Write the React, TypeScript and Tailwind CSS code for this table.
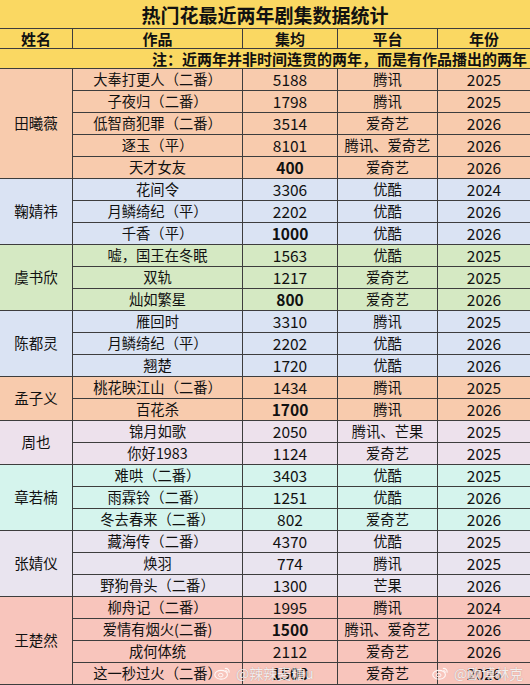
import React from "react";

type Row = { work: string; ep: string; bold?: boolean; plat: string; year: string };
type Group = { name: string; bg: string; span: string; rows: Row[] };

const groups: Group[] = [
  {
    name: "田曦薇",
    bg: "bg-[#f8cbad]",
    span: "row-span-5",
    rows: [
      { work: "大奉打更人（二番）", ep: "5188", plat: "腾讯", year: "2025" },
      { work: "子夜归（二番）", ep: "1798", plat: "腾讯", year: "2025" },
      { work: "低智商犯罪（二番）", ep: "3514", plat: "爱奇艺", year: "2026" },
      { work: "逐玉（平）", ep: "8101", plat: "腾讯、爱奇艺", year: "2026" },
      { work: "天才女友", ep: "400", bold: true, plat: "爱奇艺", year: "2026" },
    ],
  },
  {
    name: "鞠婧祎",
    bg: "bg-[#dae3f3]",
    span: "row-span-3",
    rows: [
      { work: "花间令", ep: "3306", plat: "优酷", year: "2024" },
      { work: "月鳞绮纪（平）", ep: "2202", plat: "优酷", year: "2026" },
      { work: "千香（平）", ep: "1000", bold: true, plat: "优酷", year: "2026" },
    ],
  },
  {
    name: "虞书欣",
    bg: "bg-[#d5e9c3]",
    span: "row-span-3",
    rows: [
      { work: "嘘，国王在冬眠", ep: "1563", plat: "优酷", year: "2025" },
      { work: "双轨", ep: "1217", plat: "爱奇艺", year: "2025" },
      { work: "灿如繁星", ep: "800", bold: true, plat: "爱奇艺", year: "2026" },
    ],
  },
  {
    name: "陈都灵",
    bg: "bg-[#dae3f3]",
    span: "row-span-3",
    rows: [
      { work: "雁回时", ep: "3310", plat: "腾讯", year: "2025" },
      { work: "月鳞绮纪（平）", ep: "2202", plat: "优酷", year: "2026" },
      { work: "翘楚", ep: "1720", plat: "优酷", year: "2026" },
    ],
  },
  {
    name: "孟子义",
    bg: "bg-[#f8cbad]",
    span: "row-span-2",
    rows: [
      { work: "桃花映江山（二番）", ep: "1434", plat: "腾讯", year: "2025" },
      { work: "百花杀", ep: "1700", bold: true, plat: "腾讯", year: "2026" },
    ],
  },
  {
    name: "周也",
    bg: "bg-[#ede1ec]",
    span: "row-span-2",
    rows: [
      { work: "锦月如歌", ep: "2050", plat: "腾讯、芒果", year: "2025" },
      { work: "你好1983", ep: "1124", plat: "爱奇艺", year: "2025" },
    ],
  },
  {
    name: "章若楠",
    bg: "bg-[#d5f4ed]",
    span: "row-span-3",
    rows: [
      { work: "难哄（二番）", ep: "3403", plat: "优酷", year: "2025" },
      { work: "雨霖铃（二番）", ep: "1251", plat: "优酷", year: "2026" },
      { work: "冬去春来（二番）", ep: "802", plat: "爱奇艺", year: "2026" },
    ],
  },
  {
    name: "张婧仪",
    bg: "bg-[#e9e4ef]",
    span: "row-span-3",
    rows: [
      { work: "藏海传（二番）", ep: "4370", plat: "优酷", year: "2025" },
      { work: "焕羽", ep: "774", plat: "腾讯", year: "2025" },
      { work: "野狗骨头（二番）", ep: "1300", plat: "芒果", year: "2026" },
    ],
  },
  {
    name: "王楚然",
    bg: "bg-[#f8c5bc]",
    span: "row-span-4",
    rows: [
      { work: "柳舟记（二番）", ep: "1995", plat: "腾讯", year: "2024" },
      { work: "爱情有烟火(二番)", ep: "1500", bold: true, plat: "腾讯、爱奇艺", year: "2026" },
      { work: "成何体统", ep: "2112", plat: "爱奇艺", year: "2026" },
      { work: "这一秒过火（二番）", ep: "1500", bold: true, plat: "爱奇艺", year: "2026" },
    ],
  },
];

const cjk = "font-['Noto_Sans_CJK_SC',sans-serif]";
const cell = "flex items-center justify-center leading-none text-[#111] whitespace-nowrap";

function Weibo() {
  return (
    <svg width="17" height="14" viewBox="0 0 24 20" className="opacity-90">
      <ellipse cx="10" cy="12.5" rx="9" ry="6.3" fill="none" stroke="white" strokeWidth="1.6" />
      <ellipse cx="9.5" cy="13" rx="3.2" ry="2.5" fill="none" stroke="white" strokeWidth="1.4" />
      <path d="M16 3.5 A5 5 0 0 1 21.5 9" fill="none" stroke="white" strokeWidth="1.6" strokeLinecap="round" />
      <path d="M16.5 6.5 A2.2 2.2 0 0 1 19 8.7" fill="none" stroke="white" strokeWidth="1.4" strokeLinecap="round" />
    </svg>
  );
}

export default function App() {
  return (
    <div className={`relative w-[530px] h-[685px] bg-white ${cjk}`}>
      <div className="grid grid-cols-[72px_169px_94px_99px_92px] grid-rows-[28px_19px_19px_repeat(28,21px)] gap-px bg-[#3d3d3d] border-b border-[#3d3d3d]">
        <div className={`${cell} col-span-5 bg-[#fad862] text-[19px] font-bold`}>热门花最近两年剧集数据统计</div>
        {["姓名", "作品", "集均", "平台", "年份"].map((h) => (
          <div key={h} className={`${cell} bg-[#fad862] text-[15px] font-bold`}>{h}</div>
        ))}
        <div className={`${cell} col-span-5 bg-[#fad862] text-[15px] font-bold !justify-end pr-[3px]`}>
          注：近两年并非时间连贯的两年，而是有作品播出的两年
        </div>
        {groups.map((g) => (
          <React.Fragment key={g.name}>
            <div className={`${cell} ${g.span} ${g.bg} text-[14.5px]`} style={{ gridColumn: 1 }}>{g.name}</div>
            {g.rows.map((r, i) => (
              <React.Fragment key={i}>
                <div className={`${cell} ${g.bg} text-[14.3px]`}>{r.work}</div>
                <div className={`${cell} ${g.bg} text-[15.5px] ${r.bold ? "font-bold" : ""}`}>{r.ep}</div>
                <div className={`${cell} ${g.bg} text-[14.3px]`}>{r.plat}</div>
                <div className={`${cell} ${g.bg} text-[15.5px]`}>{r.year}</div>
              </React.Fragment>
            ))}
          </React.Fragment>
        ))}
      </div>
      <div className="absolute left-[214px] top-[666px] flex items-center gap-[5px] text-[14px] leading-none text-white/85 [text-shadow:0_0_1px_rgba(0,0,0,0.35)]">
        <Weibo />
        <span>@辣辣麦糖u</span>
      </div>
      <div className="absolute left-[432px] top-[666px] flex items-center gap-[5px] text-[14px] leading-none text-white/85 [text-shadow:0_0_1px_rgba(0,0,0,0.35)]">
        <Weibo />
        <span>@欧博林克</span>
      </div>
    </div>
  );
}
